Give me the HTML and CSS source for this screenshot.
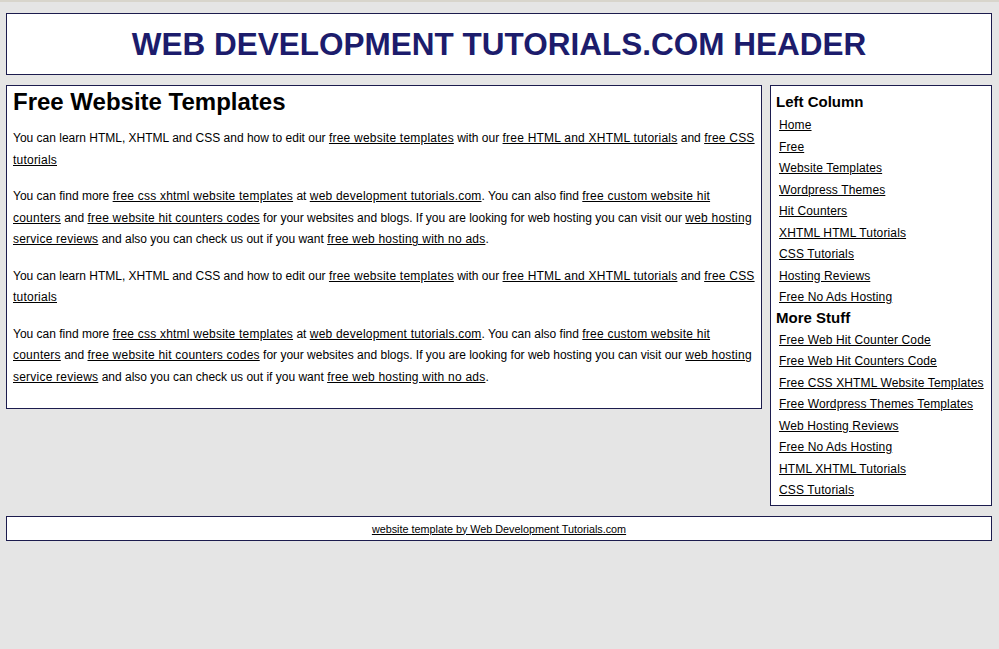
FILE: index.html
```html
<!DOCTYPE html>
<html>
<head>
    <title>Web Development Tutorials.com</title>
    <link rel="stylesheet" href="styles.css">
</head>
<body>
    <div class="page">
        <div class="header">
            <h1>WEB DEVELOPMENT TUTORIALS.COM HEADER</h1>
        </div>

        <div class="columns">
            <div class="content">
                <h2>Free Website Templates</h2>
                <p>You can learn HTML, XHTML and CSS and how to edit our <a href="#">free website templates</a> with our <a href="#">free HTML and XHTML tutorials</a> and <a href="#">free CSS tutorials</a></p>
                <p>You can find more <a href="#">free css xhtml website templates</a> at <a href="#">web development tutorials.com</a>. You can also find <a href="#">free custom website hit counters</a> and <a href="#">free website hit counters codes</a> for your websites and blogs. If you are looking for web hosting you can visit our <a href="#">web hosting service reviews</a> and also you can check us out if you want <a href="#">free web hosting with no ads</a>.</p>
                <p>You can learn HTML, XHTML and CSS and how to edit our <a href="#">free website templates</a> with our <a href="#">free HTML and XHTML tutorials</a> and <a href="#">free CSS tutorials</a></p>
                <p>You can find more <a href="#">free css xhtml website templates</a> at <a href="#">web development tutorials.com</a>. You can also find <a href="#">free custom website hit counters</a> and <a href="#">free website hit counters codes</a> for your websites and blogs. If you are looking for web hosting you can visit our <a href="#">web hosting service reviews</a> and also you can check us out if you want <a href="#">free web hosting with no ads</a>.</p>
            </div>

            <div class="sidebar">
                <h3>Left Column</h3>
                <ul>
                    <li><a href="#">Home</a></li>
                    <li><a href="#">Free</a></li>
                    <li><a href="#">Website Templates</a></li>
                    <li><a href="#">Wordpress Themes</a></li>
                    <li><a href="#">Hit Counters</a></li>
                    <li><a href="#">XHTML HTML Tutorials</a></li>
                    <li><a href="#">CSS Tutorials</a></li>
                    <li><a href="#">Hosting Reviews</a></li>
                    <li><a href="#">Free No Ads Hosting</a></li>
                </ul>
                <h4>More Stuff</h4>
                <ul>
                    <li><a href="#">Free Web Hit Counter Code</a></li>
                    <li><a href="#">Free Web Hit Counters Code</a></li>
                    <li><a href="#">Free CSS XHTML Website Templates</a></li>
                    <li><a href="#">Free Wordpress Themes Templates</a></li>
                    <li><a href="#">Web Hosting Reviews</a></li>
                    <li><a href="#">Free No Ads Hosting</a></li>
                    <li><a href="#">HTML XHTML Tutorials</a></li>
                    <li><a href="#">CSS Tutorials</a></li>
                </ul>
            </div>
        </div>

        <div class="footer">
            <a href="#">website template by Web Development Tutorials.com</a>
        </div>
    </div>
</body>
</html>
```

FILE: styles.css
```css
body {
    margin: 0;
    border-top: 2px solid #d8d5cc;
    background-color: #e5e5e5;
    font-family: "Liberation Sans", Arial, sans-serif;
    font-size: 12px;
    color: #000;
}
a {
    color: #000;
    text-decoration: underline;
}
.page {
    padding: 11px 7px 20px 6px;
}
.header {
    height: 60px;
    border: 1px solid #1c1c4e;
    background-color: #fff;
    display: flex;
    align-items: center;
    justify-content: center;
}
.header h1 {
    margin: 0;
    font-size: 31.5px;
    font-weight: bold;
    color: #1c1c6c;
}
.columns {
    display: flex;
    align-items: flex-start;
    gap: 8px;
    margin-top: 10px;
}
.content {
    width: 742px;
    padding: 0 6px 5px 6px;
    border: 1px solid #1c1c4e;
    background-color: #fff;
}
.content h2 {
    margin: 2px 0 12px 0;
    font-size: 24px;
    font-weight: bold;
}
.content p {
    margin: 0 0 15px 0;
    line-height: 21.5px;
}
.content a {
    letter-spacing: 0.22px;
}
.sidebar {
    flex: 1;
    padding: 7px 5px 3px 5px;
    border: 1px solid #1c1c4e;
    background-color: #fff;
}
.sidebar h3,
.sidebar h4 {
    font-size: 15px;
    font-weight: bold;
}
.sidebar h3 {
    margin: 0 0 5px 0;
}
.sidebar h4 {
    margin: 0 0 4px 0;
}
.sidebar ul {
    list-style: none;
    margin: 0;
    padding: 0 0 0 3px;
}
.sidebar li {
    line-height: 21.5px;
    letter-spacing: 0.13px;
}
.footer {
    margin-top: 10px;
    height: 23px;
    padding-top: 1px;
    box-sizing: border-box;
    height: 25px;
    border: 1px solid #1c1c4e;
    background-color: #fff;
    display: flex;
    align-items: center;
    justify-content: center;
    font-size: 10.8px;
}
```
